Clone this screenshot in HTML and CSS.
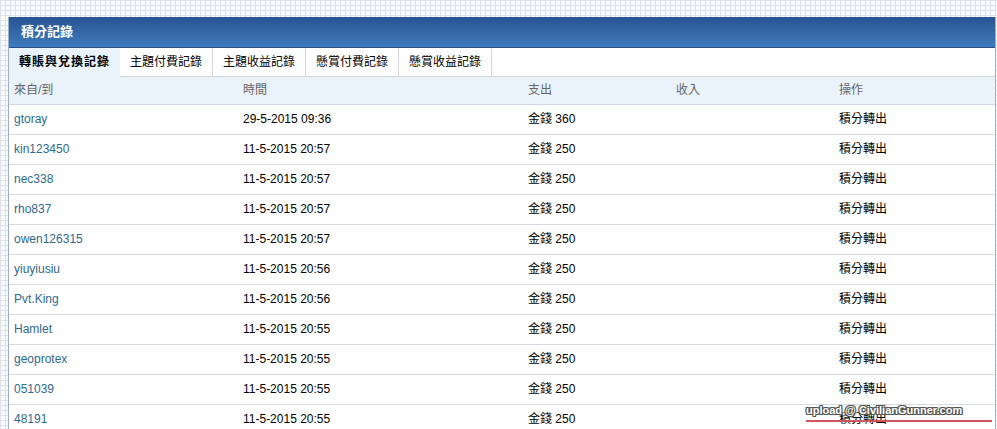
FILE: index.html
```html
<!DOCTYPE html>
<html lang="zh-Hant">
<head>
<meta charset="utf-8">
<title>積分記錄</title>
<link rel="stylesheet" href="styles.css">
</head>
<body>
<div class="panel">
  <div class="panel-head">積分記錄</div>
  <div class="tabs">
    <div class="tab active">轉賬與兌換記錄</div>
    <div class="tab">主題付費記錄</div>
    <div class="tab">主題收益記錄</div>
    <div class="tab">懸賞付費記錄</div>
    <div class="tab">懸賞收益記錄</div>
    <div class="tab-fill"></div>
  </div>
  <div class="table">
    <div class="row head">
      <div>來自/到</div><div>時間</div><div>支出</div><div>收入</div><div>操作</div>
    </div>
    <div class="row"><a class="user">gtoray</a><div>29-5-2015 09:36</div><div>金錢 360</div><div></div><div>積分轉出</div></div>
    <div class="row"><a class="user">kin123450</a><div>11-5-2015 20:57</div><div>金錢 250</div><div></div><div>積分轉出</div></div>
    <div class="row"><a class="user">nec338</a><div>11-5-2015 20:57</div><div>金錢 250</div><div></div><div>積分轉出</div></div>
    <div class="row"><a class="user">rho837</a><div>11-5-2015 20:57</div><div>金錢 250</div><div></div><div>積分轉出</div></div>
    <div class="row"><a class="user">owen126315</a><div>11-5-2015 20:57</div><div>金錢 250</div><div></div><div>積分轉出</div></div>
    <div class="row"><a class="user">yiuyiusiu</a><div>11-5-2015 20:56</div><div>金錢 250</div><div></div><div>積分轉出</div></div>
    <div class="row"><a class="user">Pvt.King</a><div>11-5-2015 20:56</div><div>金錢 250</div><div></div><div>積分轉出</div></div>
    <div class="row"><a class="user">Hamlet</a><div>11-5-2015 20:55</div><div>金錢 250</div><div></div><div>積分轉出</div></div>
    <div class="row"><a class="user">geoprotex</a><div>11-5-2015 20:55</div><div>金錢 250</div><div></div><div>積分轉出</div></div>
    <div class="row"><a class="user">051039</a><div>11-5-2015 20:55</div><div>金錢 250</div><div></div><div>積分轉出</div></div>
    <div class="row"><a class="user">48191</a><div>11-5-2015 20:55</div><div>金錢 250</div><div></div><div>積分轉出</div></div>
  </div>
</div>
<div class="watermark">upload @ CivilianGunner.com</div>
</body>
</html>
```

FILE: styles.css
```css
html, body {
  margin: 0;
  padding: 0;
  height: 100%;
  overflow: hidden;
}
body {
  background-color: #fafbfd;
  background-image:
    linear-gradient(#dde2ea 1px, transparent 1px),
    linear-gradient(90deg, #dde2ea 1px, transparent 1px);
  background-size: 5px 5px;
  font-family: "Liberation Sans", Arial, "Noto Sans CJK TC", sans-serif;
  font-size: 12px;
  color: #000;
  padding: 17px 1px 0 8px;
  position: relative;
}
.panel {
  border: 1px solid #9fb0c6;
  border-top: 0;
  background: #fff;
}
.panel-head {
  height: 30px;
  line-height: 30px;
  padding-left: 12px;
  color: #fff;
  font-weight: bold;
  font-size: 13px;
  background: linear-gradient(#295392, #3e7cbd);
  border-bottom: 1px solid #2c5384;
}
.tabs {
  display: flex;
  height: 29px;
  background: #fff;
}
.tab {
  padding: 0 10px;
  line-height: 28px;
  border-right: 1px solid #d2d7de;
  border-bottom: 1px solid #d2d7de;
  background: #fff;
  white-space: nowrap;
}
.tab.active {
  background: #eaf2fb;
  border-right: 0;
  border-bottom: 1px solid #eaf2fb;
  font-weight: bold;
  letter-spacing: 1px;
  padding: 0 10px 0 10px;
}
.tab-fill {
  flex: 1;
  border-bottom: 1px solid #d2d7de;
}
.row {
  display: grid;
  grid-template-columns: 229px 285px 148px 163px 1fr;
  height: 29px;
  line-height: 29px;
  border-bottom: 1px solid #d6dbe2;
}
.row > * {
  padding-left: 5px;
  white-space: nowrap;
}
.row.head {
  height: 27px;
  line-height: 27px;
  background: #eaf2fb;
  color: #666;
  border-bottom: 1px solid #cfd8e3;
}
.user {
  color: #2d6a8e;
  text-decoration: none;
}
.watermark {
  position: absolute;
  left: 806px;
  top: 404px;
  width: 186px;
  font-family: "Liberation Sans", Arial, sans-serif;
  font-weight: bold;
  font-size: 11px;
  color: #fff;
  text-shadow: 1px 0 0 #555, -1px 0 0 #555, 0 1px 0 #555, 0 -1px 0 #555, 1px 1px 0 #555, -1px -1px 0 #555, 1px -1px 0 #555, -1px 1px 0 #555;
  border-bottom: 2px solid #d0555f;
  padding-bottom: 3px;
  line-height: 13px;
}
```
